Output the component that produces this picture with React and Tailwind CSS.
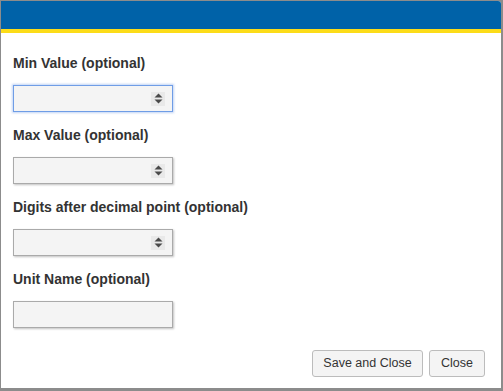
import React from 'react';

const Spinner = () => (
  <span className="absolute right-[7px] top-1/2 -translate-y-1/2 flex h-[14px] w-[14px] items-center justify-center bg-[#e9e9e9]">
    <svg width="9" height="11" viewBox="0 0 9 11">
      <path d="M0.5 4.5 L4.5 0.5 L8.5 4.5 Z" fill="#4a4a4a" />
      <path d="M0.5 6.5 L4.5 10.5 L8.5 6.5 Z" fill="#4a4a4a" />
    </svg>
  </span>
);

const Field = ({ label, spinner = false, focused = false, first = false }) => (
  <div className={first ? '' : 'mt-[16px]'}>
    <div className="h-[15px] text-[14px] leading-[15px] font-bold text-[#333]">{label}</div>
    <div
      className={`relative mt-[14px] h-[27px] w-[160px] bg-[#f4f4f4] border ${
        focused
          ? 'border-[#6f9de6] shadow-[0_0_2px_1px_rgba(120,160,230,0.45)]'
          : 'border-[#aaaaaa] shadow-[1px_1px_2px_rgba(0,0,0,0.25)]'
      }`}
    >
      {spinner && <Spinner />}
    </div>
  </div>
);

export default function App() {
  return (
    <div
      className="h-[391px] w-[503px] bg-[#8c8c8c] pl-px pt-px"
      style={{ fontFamily: '"Liberation Sans", Arial, sans-serif' }}
    >
      <div className="flex h-[387px] w-[500px] flex-col overflow-hidden rounded-tr-[3px] bg-white">
        <div className="h-[28px] bg-[#0062a8]" />
        <div className="h-[4px] bg-[#fcdc18]" />
        <div className="flex-1 pl-[12px] pt-[23px]">
          <Field label="Min Value (optional)" spinner focused first />
          <Field label="Max Value (optional)" spinner />
          <Field label="Digits after decimal point (optional)" spinner />
          <Field label="Unit Name (optional)" />
        </div>
        <div className="flex justify-end gap-[6px] pb-[11px] pr-[16px]">
          <button className="h-[27px] w-[111px] rounded-[3px] border border-[#bcbcbc] bg-[#f4f4f4] text-[12.5px] text-[#333]">
            Save and Close
          </button>
          <button className="h-[27px] w-[56px] rounded-[3px] border border-[#bcbcbc] bg-[#f4f4f4] text-[12.5px] text-[#333]">
            Close
          </button>
        </div>
      </div>
    </div>
  );
}
